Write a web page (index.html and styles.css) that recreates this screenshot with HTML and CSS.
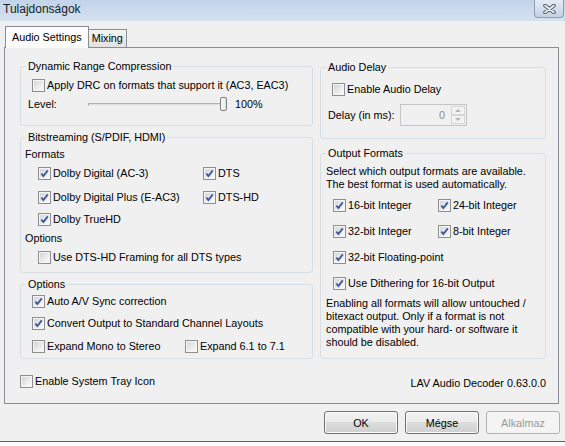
FILE: index.html
```html
<!DOCTYPE html>
<html lang="hu">
<head>
    <meta charset="UTF-8">
    <title>Tulajdonságok</title>
    <link rel="stylesheet" href="styles.css">
</head>
<body>
    <div class="titlebar">
        <span class="title">Tulajdonságok</span>
        <span class="close-btn">
            <svg width="13" height="10" viewBox="0 0 13 10">
                <path d="M2 1.5 L11 8.5 M11 1.5 L2 8.5" stroke="#4f5a69" stroke-width="3.6" stroke-linecap="round"/>
                <path d="M2 1.5 L11 8.5 M11 1.5 L2 8.5" stroke="#f3f5f8" stroke-width="1.6" stroke-linecap="round"/>
            </svg>
        </span>
    </div>

    <div class="client">
        <div class="tabs">
            <div class="tab active">Audio Settings</div>
            <div class="tab">Mixing</div>
        </div>

        <div class="panel">
            <div class="columns">
                <!-- left column -->
                <div class="col">
                    <div class="group drc">
                        <div class="group-title">Dynamic Range Compression</div>
                        <label class="row check mt3"><span class="box"></span>Apply DRC on formats that support it (AC3, EAC3)</label>
                        <div class="row level mt1">
                            <span class="level-label">Level:</span>
                            <div class="slider">
                                <div class="track"></div>
                                <div class="thumb"></div>
                            </div>
                            <span class="pct">100%</span>
                        </div>
                    </div>

                    <div class="group bitstream">
                        <div class="group-title">Bitstreaming (S/PDIF, HDMI)</div>
                        <div class="row label mt1">Formats</div>
                        <div class="row pair mt1">
                            <label class="check"><span class="box checked"><svg width="11" height="11" viewBox="0 0 11 11"><path d="M2.3 5.6 L4.4 8 L8.8 2.4" stroke="#3f5a9c" stroke-width="1.9" fill="none"/></svg></span>Dolby Digital (AC-3)</label>
                            <label class="check"><span class="box checked"><svg width="11" height="11" viewBox="0 0 11 11"><path d="M2.3 5.6 L4.4 8 L8.8 2.4" stroke="#3f5a9c" stroke-width="1.9" fill="none"/></svg></span>DTS</label>
                        </div>
                        <div class="row pair mt6">
                            <label class="check"><span class="box checked"><svg width="11" height="11" viewBox="0 0 11 11"><path d="M2.3 5.6 L4.4 8 L8.8 2.4" stroke="#3f5a9c" stroke-width="1.9" fill="none"/></svg></span>Dolby Digital Plus (E-AC3)</label>
                            <label class="check"><span class="box checked"><svg width="11" height="11" viewBox="0 0 11 11"><path d="M2.3 5.6 L4.4 8 L8.8 2.4" stroke="#3f5a9c" stroke-width="1.9" fill="none"/></svg></span>DTS-HD</label>
                        </div>
                        <label class="row check indent mt4"><span class="box checked"><svg width="11" height="11" viewBox="0 0 11 11"><path d="M2.3 5.6 L4.4 8 L8.8 2.4" stroke="#3f5a9c" stroke-width="1.9" fill="none"/></svg></span>Dolby TrueHD</label>
                        <div class="row label mt1">Options</div>
                        <label class="row check indent mt1"><span class="box"></span>Use DTS-HD Framing for all DTS types</label>
                    </div>

                    <div class="group options">
                        <div class="group-title">Options</div>
                        <label class="row check mt1"><span class="box checked"><svg width="11" height="11" viewBox="0 0 11 11"><path d="M2.3 5.6 L4.4 8 L8.8 2.4" stroke="#3f5a9c" stroke-width="1.9" fill="none"/></svg></span>Auto A/V Sync correction</label>
                        <label class="row check mt4"><span class="box checked"><svg width="11" height="11" viewBox="0 0 11 11"><path d="M2.3 5.6 L4.4 8 L8.8 2.4" stroke="#3f5a9c" stroke-width="1.9" fill="none"/></svg></span>Convert Output to Standard Channel Layouts</label>
                        <div class="row pair mt5">
                            <label class="check"><span class="box"></span>Expand Mono to Stereo</label>
                            <label class="check"><span class="box"></span>Expand 6.1 to 7.1</label>
                        </div>
                    </div>
                </div>

                <!-- right column -->
                <div class="col">
                    <div class="group delay">
                        <div class="group-title">Audio Delay</div>
                        <label class="row check mt6"><span class="box"></span>Enable Audio Delay</label>
                        <div class="row delay-row mt6">
                            <span class="delay-label">Delay (in ms):</span>
                            <div class="spin">
                                <span class="spin-val">0</span>
                                <span class="spin-btns">
                                    <span class="spin-btn"><span class="arrow-up"></span></span>
                                    <span class="spin-btn"><span class="arrow-down"></span></span>
                                </span>
                            </div>
                        </div>
                    </div>

                    <div class="group output">
                        <div class="group-title">Output Formats</div>
                        <p class="note mt5">Select which output formats are available.<br>The best format is used automatically.</p>
                        <div class="row pair mt5">
                            <label class="check"><span class="box checked"><svg width="11" height="11" viewBox="0 0 11 11"><path d="M2.3 5.6 L4.4 8 L8.8 2.4" stroke="#3f5a9c" stroke-width="1.9" fill="none"/></svg></span>16-bit Integer</label>
                            <label class="check"><span class="box checked"><svg width="11" height="11" viewBox="0 0 11 11"><path d="M2.3 5.6 L4.4 8 L8.8 2.4" stroke="#3f5a9c" stroke-width="1.9" fill="none"/></svg></span>24-bit Integer</label>
                        </div>
                        <div class="row pair mt8">
                            <label class="check"><span class="box checked"><svg width="11" height="11" viewBox="0 0 11 11"><path d="M2.3 5.6 L4.4 8 L8.8 2.4" stroke="#3f5a9c" stroke-width="1.9" fill="none"/></svg></span>32-bit Integer</label>
                            <label class="check"><span class="box checked"><svg width="11" height="11" viewBox="0 0 11 11"><path d="M2.3 5.6 L4.4 8 L8.8 2.4" stroke="#3f5a9c" stroke-width="1.9" fill="none"/></svg></span>8-bit Integer</label>
                        </div>
                        <label class="row check mt8"><span class="box checked"><svg width="11" height="11" viewBox="0 0 11 11"><path d="M2.3 5.6 L4.4 8 L8.8 2.4" stroke="#3f5a9c" stroke-width="1.9" fill="none"/></svg></span>32-bit Floating-point</label>
                        <label class="row check mt8"><span class="box checked"><svg width="11" height="11" viewBox="0 0 11 11"><path d="M2.3 5.6 L4.4 8 L8.8 2.4" stroke="#3f5a9c" stroke-width="1.9" fill="none"/></svg></span>Use Dithering for 16-bit Output</label>
                        <p class="note mt5">Enabling all formats will allow untouched /<br>bitexact output. Only if a format is not<br>compatible with your hard- or software it<br>should be disabled.</p>
                    </div>
                </div>
            </div>

            <div class="footer">
                <label class="check"><span class="box"></span>Enable System Tray Icon</label>
                <span class="version">LAV Audio Decoder 0.63.0.0</span>
            </div>
        </div>

        <div class="buttons">
            <button class="btn">OK</button>
            <button class="btn">Mégse</button>
            <button class="btn" disabled>Alkalmaz</button>
        </div>
    </div>
    <div class="below"></div>
</body>
</html>
```

FILE: styles.css
```css
* {
    box-sizing: border-box;
}

body {
    margin: 0;
    width: 565px;
    height: 446px;
    overflow: hidden;
    background: #f0f0f0;
    font-family: "Liberation Sans", Arial, sans-serif;
    font-size: 10.8px;
    color: #000;
}

/* window frame */
.titlebar {
    height: 21px;
    display: flex;
    justify-content: space-between;
    align-items: flex-start;
    background: linear-gradient(to bottom, #c3d4e9, #d4e1f0);
}

.title {
    font-size: 12px;
    line-height: 19px;
    padding-left: 3px;
    color: #141c26;
}

.close-btn {
    width: 30px;
    height: 18px;
    margin-right: 1px;
    border: 1px solid #8b9cb5;
    border-top: none;
    border-radius: 0 0 4px 4px;
    background: linear-gradient(to bottom, #e4ebf4, #c5d2e3);
    display: flex;
    align-items: center;
    justify-content: center;
}

.client {
    padding: 5px 6px 0 4px;
}

/* tabs */
.tabs {
    display: flex;
    align-items: flex-end;
    height: 21px;
    margin-left: 1px;
    position: relative;
    z-index: 1;
}

.tab {
    height: 18px;
    line-height: 16px;
    padding: 0 3px;
    border: 1px solid #898c95;
    border-bottom: none;
    border-left: none;
    background: linear-gradient(to bottom, #f4f4f4, #e1e1e1);
}

.tab.active {
    height: 22px;
    margin-bottom: -1px;
    padding: 0 6px;
    line-height: 21px;
    border-left: 1px solid #898c95;
    background: #fcfcfc;
}

.panel {
    height: 357px;
    border: 1px solid #898c95;
    padding: 18px 12px 0 15px;
}

.columns {
    display: grid;
    grid-template-columns: 293px 226px;
    column-gap: 7px;
    align-items: start;
}

.col {
    display: flex;
    flex-direction: column;
}

/* group boxes */
.group {
    border: 1px solid #d5dfe5;
    border-radius: 3px;
    display: flex;
    flex-direction: column;
}

.group-title {
    align-self: flex-start;
    margin: -7px 0 0 5px;
    padding: 0 2px;
    line-height: 13px;
    background: #f0f0f0;
}

.row {
    display: flex;
    align-items: center;
    height: 18px;
}

.check {
    display: flex;
    align-items: center;
}

.box {
    width: 13px;
    height: 13px;
    margin-right: 2px;
    flex: none;
    border: 1px solid #8e8f8f;
    background: linear-gradient(135deg, #cfd1d3 0%, #eeeeee 60%, #fdfdfd 100%);
    box-shadow: inset 0 0 0 1px #f5f5f5;
}

.box svg {
    display: block;
    margin: 0;
}

.mt1 { margin-top: 1px; }
.mt3 { margin-top: 3px; }
.mt4 { margin-top: 4px; }
.mt5 { margin-top: 5px; }
.mt6 { margin-top: 6px; }
.mt8 { margin-top: 8px; }

/* Dynamic Range Compression */
.drc {
    padding-bottom: 12px;
}

.drc .check {
    margin-left: 11px;
}

.level {
    margin-left: 7px;
}

.level-label {
    width: 60px;
}

.slider {
    width: 139px;
    display: flex;
    align-items: center;
}

.track {
    flex: 1;
    height: 3px;
    border-top: 1px solid #b0b0b0;
    border-bottom: 1px solid #ececec;
    background: #e0e0e0;
    border-left: 1px solid #a9a9a9;
}

.thumb {
    width: 7px;
    height: 14px;
    border: 1px solid #7c7c7c;
    border-radius: 2px;
    background: linear-gradient(to right, #fbfbfb, #e2e2e2);
}

.pct {
    margin-left: 8px;
}

/* Bitstreaming */
.bitstream {
    margin-top: 11px;
    padding-bottom: 6px;
}

.bitstream .label {
    margin-left: 4px;
}

.bitstream .pair,
.bitstream .indent {
    margin-left: 17px;
}

.bitstream .pair .check:first-child {
    width: 165px;
}

/* Options */
.options {
    margin-top: 11px;
    padding-bottom: 3px;
}

.options .row {
    margin-left: 11px;
}

.options .pair .check:first-child {
    width: 153px;
}

/* Audio Delay */
.delay {
    margin-top: 1px;
    padding-bottom: 12px;
}

.delay .check {
    margin-left: 11px;
}

.delay-row {
    height: 22px;
    margin-left: 7px;
}

.delay-label {
    width: 72px;
}

.spin {
    width: 67px;
    height: 22px;
    display: flex;
    border: 1px solid #c3c5c8;
    background: #f0f0f0;
}

.spin-val {
    flex: 1;
    text-align: right;
    padding-right: 6px;
    line-height: 20px;
    color: #8d8d8d;
}

.spin-btns {
    width: 15px;
    display: flex;
    flex-direction: column;
    padding: 1px 1px 1px 0;
}

.spin-btn {
    flex: 1;
    display: flex;
    align-items: center;
    justify-content: center;
    border: 1px solid #d6d6d6;
    background: #f3f3f3;
}

.arrow-up {
    border-left: 3px solid transparent;
    border-right: 3px solid transparent;
    border-bottom: 3px solid #b5b5b5;
}

.arrow-down {
    border-left: 3px solid transparent;
    border-right: 3px solid transparent;
    border-top: 3px solid #b5b5b5;
}

/* Output Formats */
.output {
    margin-top: 14px;
    padding-bottom: 9px;
}

.note {
    margin: 0 0 0 5px;
    line-height: 13px;
}

.output .note.mt5 {
    margin-top: 5px;
}

.output .row {
    margin-left: 12px;
}

.output .pair .check:first-child {
    width: 105px;
}

/* footer */
.footer {
    display: flex;
    justify-content: space-between;
    align-items: center;
    height: 18px;
    margin-top: 13px;
}

.version {
    margin-top: 4px;
}

/* dialog buttons */
.buttons {
    display: flex;
    justify-content: flex-end;
    gap: 7px;
    margin: 7px -1px 0 0;
}

.btn {
    width: 74px;
    height: 23px;
    padding: 0;
    font-family: inherit;
    font-size: 10.8px;
    color: #000;
    border: 1px solid #707070;
    border-radius: 3px;
    background: linear-gradient(to bottom, #f2f2f2 0%, #ebebeb 49%, #dddddd 50%, #cfcfcf 100%);
    box-shadow: inset 0 0 0 1px #fbfbfb;
}

.btn:disabled {
    color: #9a9a9a;
    border-color: #adb2b5;
    background: #f4f4f4;
    box-shadow: none;
}

.below {
    margin-top: 7px;
    height: 10px;
    border-top: 1px solid #5f5f5f;
    background: #fafafa;
}
```
